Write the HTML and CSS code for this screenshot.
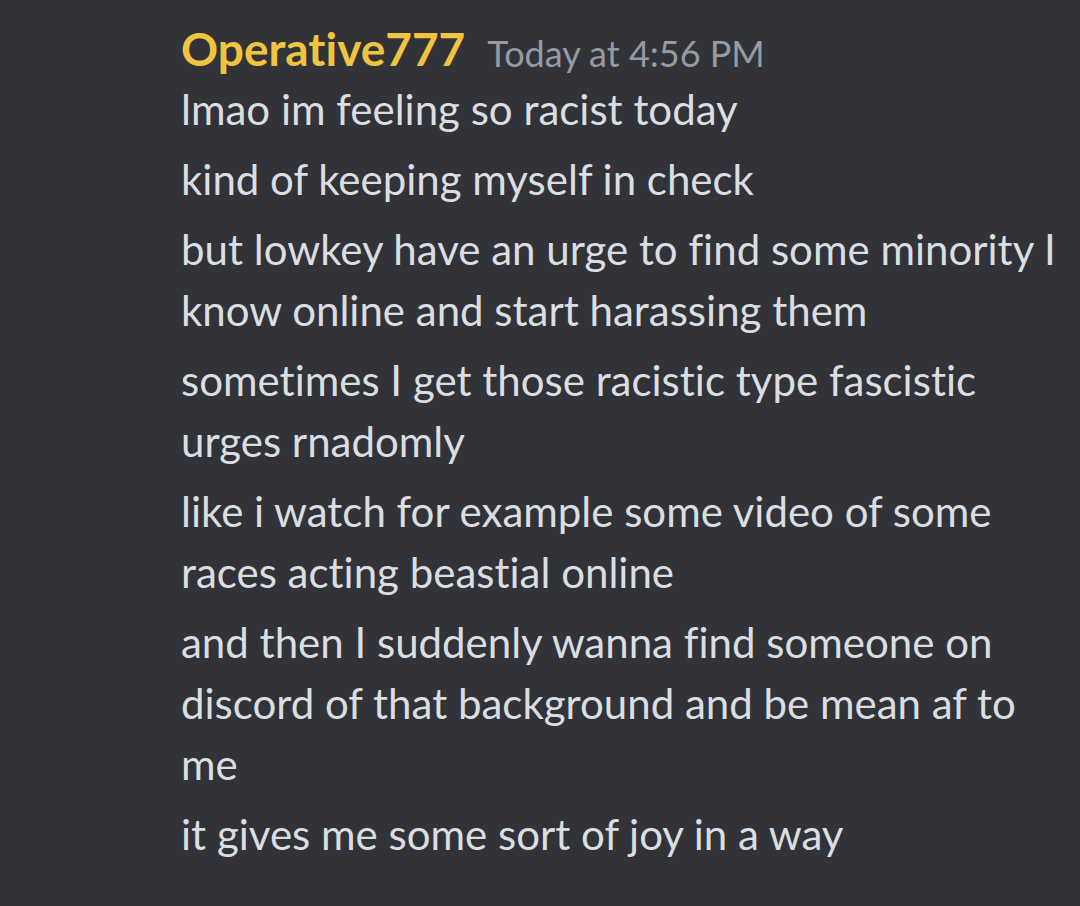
FILE: index.html
```html
<!DOCTYPE html>
<html lang="en">
<head>
<meta charset="utf-8">
<title>Message</title>
<link rel="stylesheet" href="styles.css">
</head>
<body>
<main class="chat">
  <div class="group">
    <header class="head">
      <span class="author">Operative777</span>
      <span class="stamp">Today at 4:56 PM</span>
    </header>
    <div class="msgs">
      <div class="msg">lmao im feeling so racist today</div>
      <div class="msg">kind of keeping myself in check</div>
      <div class="msg">but lowkey have an urge to find some minority I know online and start harassing them</div>
      <div class="msg">sometimes I get those racistic type fascistic urges rnadomly</div>
      <div class="msg">like i watch for example some video of some races acting beastial online</div>
      <div class="msg">and then I suddenly wanna find someone on discord of that background and be mean af to me</div>
      <div class="msg">it gives me some sort of joy in a way</div>
    </div>
  </div>
</main>
</body>
</html>
```
FILE: styles.css
```css
html, body {
  margin: 0;
  padding: 0;
  background: #313338;
  height: 100%;
}
body {
  font-family: "Lato", "Noto Sans", sans-serif;
  color: #dbdee1;
  font-variant-ligatures: none;
}
.chat {
  padding: 21px 0 0 181px;
}
.group {
  width: 880px;
}
.head {
  display: flex;
  align-items: flex-start;
  gap: 22px;
  height: 54px;
  white-space: nowrap;
}
.author {
  font-size: 46px;
  font-weight: 700;
  line-height: 56px;
  color: #f0c43f;
}
.stamp {
  font-size: 36px;
  line-height: 65px;
  color: #949ba4;
}
.msg {
  font-size: 42px;
  line-height: 61px;
  padding: 4px 0 5px;
}
```
